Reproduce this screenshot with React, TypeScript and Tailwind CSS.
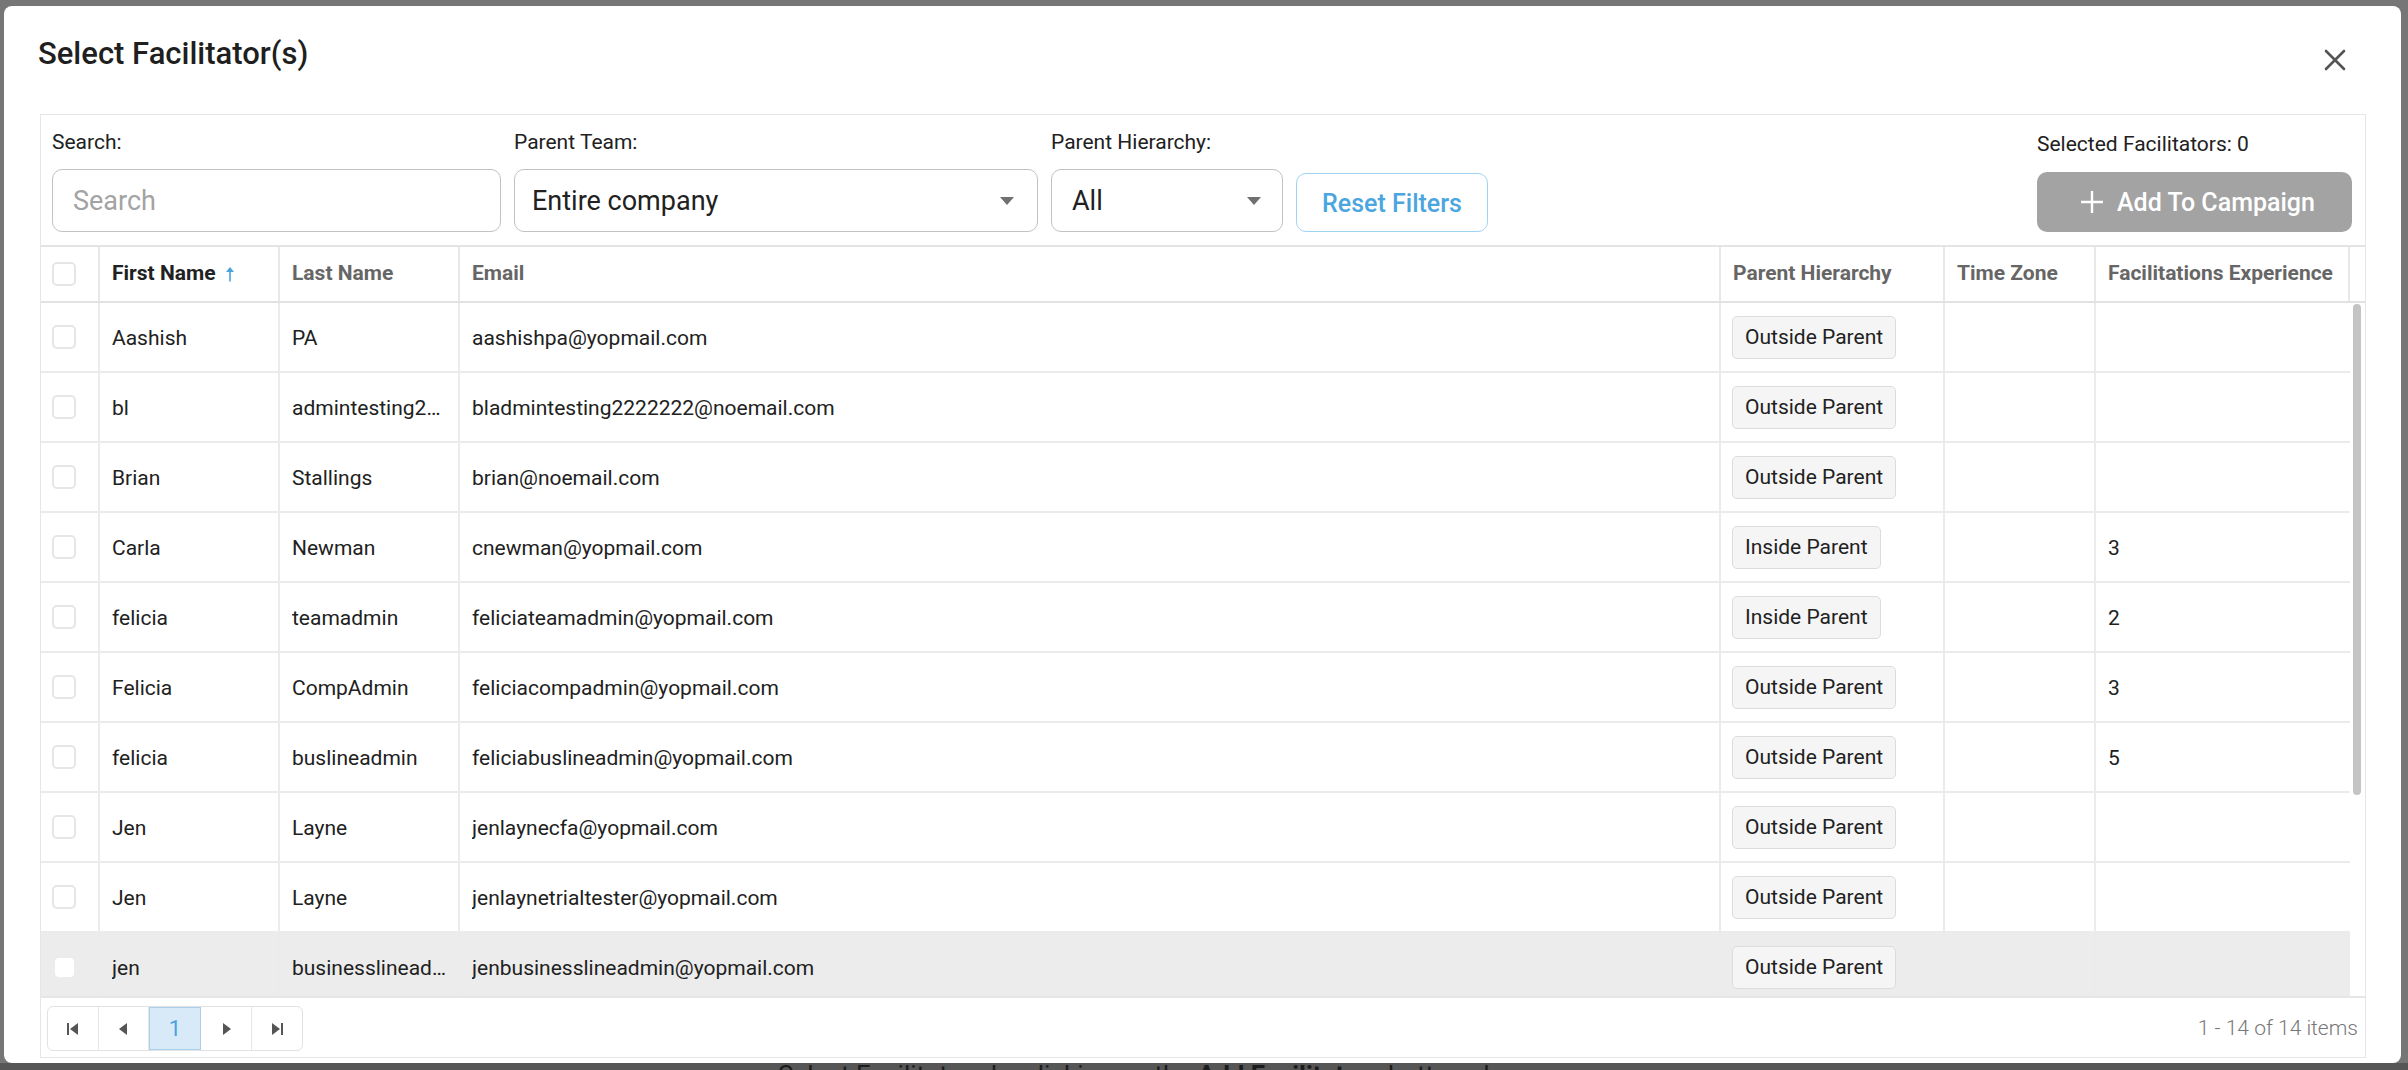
import React from 'react';

type Row = {
  first: string;
  last: string;
  email: string;
  hierarchy: 'Outside Parent' | 'Inside Parent';
  zone: string;
  experience: string;
};

const rows: Row[] = [
  { first: 'Aashish', last: 'PA', email: 'aashishpa@yopmail.com', hierarchy: 'Outside Parent', zone: '', experience: '' },
  { first: 'bl', last: 'admintesting2222222', email: 'bladmintesting2222222@noemail.com', hierarchy: 'Outside Parent', zone: '', experience: '' },
  { first: 'Brian', last: 'Stallings', email: 'brian@noemail.com', hierarchy: 'Outside Parent', zone: '', experience: '' },
  { first: 'Carla', last: 'Newman', email: 'cnewman@yopmail.com', hierarchy: 'Inside Parent', zone: '', experience: '3' },
  { first: 'felicia', last: 'teamadmin', email: 'feliciateamadmin@yopmail.com', hierarchy: 'Inside Parent', zone: '', experience: '2' },
  { first: 'Felicia', last: 'CompAdmin', email: 'feliciacompadmin@yopmail.com', hierarchy: 'Outside Parent', zone: '', experience: '3' },
  { first: 'felicia', last: 'buslineadmin', email: 'feliciabuslineadmin@yopmail.com', hierarchy: 'Outside Parent', zone: '', experience: '5' },
  { first: 'Jen', last: 'Layne', email: 'jenlaynecfa@yopmail.com', hierarchy: 'Outside Parent', zone: '', experience: '' },
  { first: 'Jen', last: 'Layne', email: 'jenlaynetrialtester@yopmail.com', hierarchy: 'Outside Parent', zone: '', experience: '' },
  { first: 'jen', last: 'businesslineadmin', email: 'jenbusinesslineadmin@yopmail.com', hierarchy: 'Outside Parent', zone: '', experience: '' },
];

const rowCols = 'grid grid-cols-[59px_180px_180px_1261px_224px_151px_254px]';
const headCols = 'grid grid-cols-[59px_180px_180px_1261px_224px_151px_254px_15px]';

function Checkbox({ light }: { light?: boolean }) {
  if (light) {
    return <span className="ml-[3px] block h-[19px] w-[19px] rounded-[4px] bg-white" />;
  }
  return <span className="block h-[24px] w-[24px] rounded-[5px] border-2 border-[#e6e6e6] bg-white" />;
}

function Caret() {
  return (
    <svg width="14" height="8" viewBox="0 0 14 8" className="shrink-0">
      <path d="M0 0 L14 0 L7 8 Z" fill="#707070" />
    </svg>
  );
}

function PagerIcon({ kind }: { kind: 'first' | 'prev' | 'next' | 'last' }) {
  return (
    <svg width="12" height="12" viewBox="0 0 12 12">
      {kind === 'first' && (
        <>
          <rect x="0" y="0" width="2" height="12" fill="#555" />
          <path d="M11 0 L11 12 L3 6 Z" fill="#555" />
        </>
      )}
      {kind === 'prev' && <path d="M9 0 L9 12 L1 6 Z" fill="#555" />}
      {kind === 'next' && <path d="M3 0 L3 12 L11 6 Z" fill="#555" />}
      {kind === 'last' && (
        <>
          <path d="M1 0 L1 12 L9 6 Z" fill="#555" />
          <rect x="10" y="0" width="2" height="12" fill="#555" />
        </>
      )}
    </svg>
  );
}

function HeadCell({ children, last }: { children?: React.ReactNode; last?: boolean }) {
  return (
    <div className={`flex items-center px-[12px] ${last ? '' : 'border-r-2 border-[#e8e8e8]'}`}>
      {children}
    </div>
  );
}

export default function App() {
  return (
    <div
      className="flex h-[1070px] w-[2408px] flex-col overflow-hidden bg-[#767676] text-[#212121]"
      style={{ fontFamily: 'Roboto, "Noto Sans", sans-serif' }}
    >
      <div className="pl-[4px] pt-[6px]">
        <div className="flex h-[1057px] w-[2397px] flex-col rounded-[8px] bg-white">
          {/* title */}
          <div className="flex h-[108px] shrink-0 items-start justify-between pl-[34px] pr-[55px]">
            <h1 className="pt-[30px] text-[31px] font-medium leading-[36px] text-[#1f1f1f]">Select Facilitator(s)</h1>
            <svg width="22" height="22" viewBox="0 0 22 22" className="mt-[43px]">
              <path d="M2 2 L20 20 M20 2 L2 20" stroke="#555" strokeWidth="2.6" strokeLinecap="round" />
            </svg>
          </div>

          {/* panel */}
          <div className="ml-[36px] flex h-[944px] w-[2326px] flex-col border border-[#e6e6e6]">
            {/* toolbar */}
            <div className="flex h-[132px] shrink-0 items-end border-b-2 border-[#e4e4e4] pb-[13px] pl-[11px] pr-[13px]">
              <div className="flex w-[449px] flex-col">
                <label className="text-[21px] leading-[25px]">Search:</label>
                <div className="mt-[14px] flex h-[63px] items-center rounded-[10px] border border-[#c2c2c2] pl-[20px] pt-[2px] text-[27px] text-[#a3a3a3]">
                  Search
                </div>
              </div>
              <div className="ml-[13px] flex w-[524px] flex-col">
                <label className="text-[21px] leading-[25px]">Parent Team:</label>
                <div className="mt-[14px] flex h-[63px] items-center justify-between rounded-[10px] border border-[#c2c2c2] pl-[17px] pr-[23px] text-[27px]">
                  <span className="pt-[2px]">Entire company</span>
                  <Caret />
                </div>
              </div>
              <div className="ml-[13px] flex w-[232px] flex-col">
                <label className="text-[21px] leading-[25px]">Parent Hierarchy:</label>
                <div className="mt-[14px] flex h-[63px] items-center justify-between rounded-[10px] border border-[#c2c2c2] pl-[20px] pr-[21px] text-[27px]">
                  <span className="pt-[2px]">All</span>
                  <Caret />
                </div>
              </div>
              <button className="ml-[13px] flex h-[59px] w-[192px] items-center justify-center rounded-[10px] border border-[#9fd3f2] pt-[2px] text-[25px] font-medium text-[#4ba6e0]">
                Reset Filters
              </button>
              <div className="ml-auto flex w-[315px] flex-col">
                <span className="text-[21px] leading-[25px]">Selected Facilitators: 0</span>
                <button className="mt-[15px] flex h-[60px] items-center justify-center gap-[13px] rounded-[10px] bg-[#a3a3a3] pl-[6px] text-[25px] font-medium text-white">
                  <svg width="24" height="24" viewBox="0 0 24 24">
                    <path d="M12 1 V23 M1 12 H23" stroke="white" strokeWidth="2.4" />
                  </svg>
                  <span className="pt-[2px]">Add To Campaign</span>
                </button>
              </div>
            </div>

            {/* header */}
            <div className={`${headCols} h-[56px] shrink-0 border-b-2 border-[#e2e2e2] text-[21px] font-bold`}>
              <div className="flex items-center border-r-2 border-[#e8e8e8] pl-[11px]">
                <Checkbox />
              </div>
              <HeadCell>
                <span className="text-[#212121]">First Name</span>
                <svg width="10" height="16" viewBox="0 0 10 16" className="ml-[10px]">
                  <path d="M5 1 L9 6 L1 6 Z" fill="#4aa3df" />
                  <rect x="4.2" y="5" width="1.6" height="10.5" fill="#4aa3df" />
                </svg>
              </HeadCell>
              <HeadCell><span className="text-[#666]">Last Name</span></HeadCell>
              <HeadCell><span className="text-[#666]">Email</span></HeadCell>
              <HeadCell><span className="text-[#666]">Parent Hierarchy</span></HeadCell>
              <HeadCell><span className="text-[#666]">Time Zone</span></HeadCell>
              <HeadCell><span className="text-[#666]">Facilitations Experience</span></HeadCell>
              <HeadCell last />
            </div>

            {/* body */}
            <div className="flex h-[693px] shrink-0">
              <div className="flex-1 overflow-hidden text-[21px]">
                {rows.map((r, i) => {
                  const hovered = i === rows.length - 1;
                  return (
                    <div
                      key={i}
                      className={`${rowCols} h-[70px] border-b-2 border-[#ebebeb] ${hovered ? 'bg-[#ececec]' : 'bg-white'}`}
                    >
                      <div className="flex items-center border-r-2 border-[#ebebeb] pl-[11px]">
                        <Checkbox light={hovered} />
                      </div>
                      <div className="flex items-center border-r-2 border-[#ebebeb] px-[12px] pt-[3px]">
                        <span className="truncate">{r.first}</span>
                      </div>
                      <div className="flex min-w-0 items-center border-r-2 border-[#ebebeb] px-[12px] pt-[3px]">
                        <span className="truncate">{r.last}</span>
                      </div>
                      <div className="flex items-center border-r-2 border-[#ebebeb] px-[12px] pt-[3px]">
                        <span className="truncate">{r.email}</span>
                      </div>
                      <div className="flex items-center border-r-2 border-[#ebebeb] px-[11px]">
                        <span className="flex h-[43px] items-center rounded-[5px] border border-[#dcdcdc] bg-[#f5f5f5] px-[12px] pt-[2px]">
                          {r.hierarchy}
                        </span>
                      </div>
                      <div className="flex items-center border-r-2 border-[#ebebeb] px-[12px] pt-[3px]">{r.zone}</div>
                      <div className="flex items-center px-[12px] pt-[3px]">{r.experience}</div>
                    </div>
                  );
                })}
              </div>
              <div className="w-[15px] shrink-0 pl-[3px] pt-[1px]">
                <div className="h-[491px] w-[8px] rounded-full bg-[#c4c4c4]" />
              </div>
            </div>

            {/* pager */}
            <div className="flex h-[61px] shrink-0 items-center justify-between border-t-2 border-[#e6e6e6] pl-[6px] pr-[7px] pt-[2px]">
              <div className="flex h-[45px] overflow-hidden rounded-[6px] border border-[#e2e2e2]">
                <span className="flex w-[51px] items-center justify-center border-r border-[#e6e6e6]"><PagerIcon kind="first" /></span>
                <span className="flex w-[50px] items-center justify-center border-r border-[#e6e6e6]"><PagerIcon kind="prev" /></span>
                <span className="flex w-[52px] items-center justify-center border border-[#a9d0ec] bg-[#d8eaf7] text-[22px] text-[#4aa3df]">1</span>
                <span className="flex w-[51px] items-center justify-center border-r border-[#e6e6e6]"><PagerIcon kind="next" /></span>
                <span className="flex w-[50px] items-center justify-center"><PagerIcon kind="last" /></span>
              </div>
              <span className="text-[21px] font-light text-[#777]">1 - 14 of 14 items</span>
            </div>
          </div>
        </div>
      </div>

      {/* page behind the overlay */}
      <div className="flex-1 bg-[#565656] pl-[778px]">
        <p className="mt-[-1px] text-[26px] leading-none text-[#1c1c1c]">
          Select Facilitators by clicking on the <b>Add Facilitators</b> button above
        </p>
      </div>
    </div>
  );
}
